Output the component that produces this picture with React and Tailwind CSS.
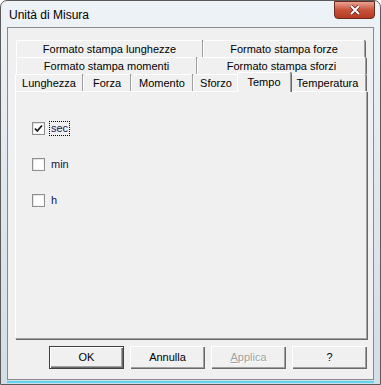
import React from "react";

const font = { fontFamily: '"Liberation Sans", Arial, sans-serif' };

function Tab({ label, w, selected }) {
  return (
    <div
      className={`flex items-center justify-center border-l border-t border-r border-l-white border-t-white border-r-[#a0a0a0] shadow-[1px_0_0_#696969] rounded-t-[2px] bg-[#f0f0f0] ${
        selected ? "h-[20px] -mb-[1px] -mx-[2px] relative z-10" : "h-[17px]"
      } ${w}`}
    >
      {label}
    </div>
  );
}

function Check({ label, checked, focus, className }) {
  return (
    <div className={`flex items-center gap-[5px] ${className}`}>
      <div className="w-[13px] h-[13px] border border-[#8e8f8f] bg-gradient-to-br from-[#dcdcdc] to-white flex items-center justify-center">
        <div className="w-[9px] h-[9px] bg-white flex items-center justify-center">
          {checked && (
            <svg width="9" height="9" viewBox="0 0 9 9">
              <path d="M1 4.5 L3.3 7 L8 1.5" stroke="#1a1a1a" strokeWidth="1.8" fill="none" />
            </svg>
          )}
        </div>
      </div>
      <span
        className={`text-[11px] leading-[13px] text-[#14144a] px-[1px] ${
          focus ? "outline outline-1 outline-dotted outline-black" : ""
        }`}
      >
        {label}
      </span>
    </div>
  );
}

function Btn({ children, def, disabled }) {
  return (
    <div
      className={`w-[75px] h-[23px] flex items-center justify-center text-[11px] ${
        def
          ? "border border-[#404040] shadow-[inset_1px_1px_0_white,inset_-1px_-1px_0_#696969,inset_-2px_-2px_0_#a0a0a0]"
          : "shadow-[inset_1px_1px_0_white,inset_-1px_-1px_0_#696969,inset_-2px_-2px_0_#a0a0a0]"
      } ${disabled ? "text-[#a0a0a0] [text-shadow:1px_1px_0_white]" : "text-black"}`}
    >
      {children}
    </div>
  );
}

export default function App() {
  return (
    <div className="w-[381px] h-[385px] bg-white" style={font}>
      <div className="w-[381px] h-[385px] border border-[#5b5b5b] rounded-t-[7px] bg-gradient-to-b from-[#eef3f7] via-[#dfe7ee] to-[#d3dde6] flex flex-col px-[6px] pb-[4px] relative">
        <div className="h-[26px] flex items-center justify-between">
          <span className="text-[12px] text-black pl-[2px] pt-[2px]">Unità di Misura</span>
          <div className="w-[41px] h-[18px] -mt-[8px] -mr-[1px] rounded-b-[4px] border border-[#6b2a20] bg-gradient-to-b from-[#e8a291] via-[#c8513a] to-[#b53a22] flex items-center justify-center">
            <svg width="12" height="10" viewBox="0 0 12 10">
              <path d="M2 1 L10 9 M10 1 L2 9" stroke="#5a2018" strokeWidth="3.4" />
              <path d="M2 1 L10 9 M10 1 L2 9" stroke="white" strokeWidth="2" />
            </svg>
          </div>
        </div>
        <div className="flex-1 border border-[#8a8a8a] bg-[#f0f0f0] flex flex-col pt-[12px] pl-[7px] pr-[6px] text-[11px] text-black">
          <div className="flex pl-[1px]">
            <Tab label="Formato stampa lunghezze" w="w-[187px]" />
            <Tab label="Formato stampa forze" w="w-[162px]" />
          </div>
          <div className="flex pl-[1px]">
            <Tab label="Formato stampa momenti" w="w-[181px]" />
            <Tab label="Formato stampa sforzi" w="w-[169px]" />
          </div>
          <div className="flex items-end h-[17px]">
            <Tab label="Lunghezza" w="w-[68px]" />
            <Tab label="Forza" w="w-[48px]" />
            <Tab label="Momento" w="w-[62px]" />
            <Tab label="Sforzo" w="w-[46px]" />
            <Tab label="Tempo" w="w-[54px]" selected />
            <Tab label="Temperatura" w="w-[77px]" />
          </div>
          <div className="h-[248px] border-l border-t border-r border-b border-l-white border-t-white border-r-[#a0a0a0] border-b-[#a0a0a0] shadow-[1px_1px_0_#696969] flex flex-col pl-[16px] pt-[30px]">
            <Check label="sec" checked focus />
            <Check label="min" className="mt-[23px]" />
            <Check label="h" className="mt-[23px]" />
          </div>
          <div className="flex justify-end gap-[6px] mt-[7px]">
            <Btn def>OK</Btn>
            <Btn>Annulla</Btn>
            <Btn disabled>
              <span className="underline">A</span>pplica
            </Btn>
            <Btn>?</Btn>
          </div>
        </div>
        <div className="absolute left-[6px] right-[6px] bottom-[1px] h-[2px] bg-[#5fd6f0]" />
      </div>
    </div>
  );
}
